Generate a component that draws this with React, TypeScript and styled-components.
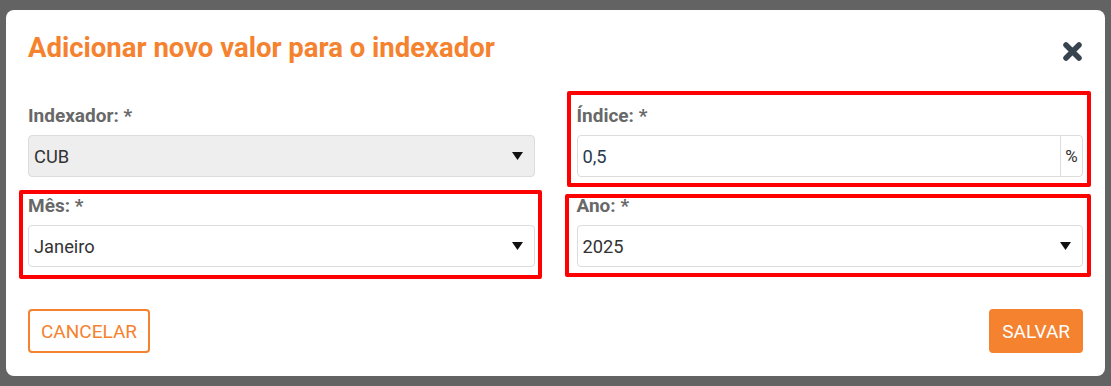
import React from "react";
import styled, { createGlobalStyle } from "styled-components";

const GlobalStyle = createGlobalStyle`
  body {
    margin: 0;
    background: #636363;
    font-family: Roboto, "Liberation Sans", sans-serif;
  }
`;

const orange = "#f5822f";

const Backdrop = styled.div`
  width: 1111px;
  height: 386px;
  box-sizing: border-box;
  padding: 10px 6px;
  background: #636363;
`;

const Modal = styled.div`
  width: 1099px;
  height: 366px;
  box-sizing: border-box;
  background: #fff;
  border-radius: 8px;
  padding: 22px 22px 23px 22px;
  display: flex;
  flex-direction: column;
`;

const Header = styled.div`
  display: flex;
  align-items: center;
  justify-content: space-between;
`;

const Title = styled.h4`
  margin: 0;
  font-size: 27.5px;
  line-height: 32px;
  font-weight: 700;
  color: ${orange};
`;

const CloseButton = styled.button`
  border: 0;
  background: none;
  padding: 0;
  margin-top: 6px;
  width: 21px;
  height: 21px;
  display: flex;
  cursor: pointer;
`;

const FormGrid = styled.div`
  display: grid;
  grid-template-columns: 1fr 1fr;
  column-gap: 42px;
  row-gap: 19px;
  margin-top: 42px;
`;

type Box = { t: number; r: number; b: number; l: number };

const Field = styled.div<{ $mark?: Box }>`
  position: relative;
  display: flex;
  flex-direction: column;

  ${({ $mark }) =>
    $mark &&
    `
    &::after {
      content: "";
      position: absolute;
      top: ${$mark.t}px;
      right: ${$mark.r}px;
      bottom: ${$mark.b}px;
      left: ${$mark.l}px;
      border: 4px solid #ff0000;
      border-radius: 2px;
      pointer-events: none;
    }
  `}
`;

const Label = styled.label`
  font-size: 19px;
  line-height: 20px;
  font-weight: 700;
  color: #686868;
  margin-bottom: 9px;
`;

const Control = styled.div<{ $disabled?: boolean }>`
  height: 42px;
  box-sizing: border-box;
  display: flex;
  align-items: center;
  border: 1px solid #dcdcdc;
  border-radius: 4px;
  background: ${({ $disabled }) => ($disabled ? "#eeeeee" : "#fff")};
  overflow: hidden;
`;

const Value = styled.span<{ $tint?: string }>`
  flex: 1;
  padding: 0 5px;
  font-size: 18.3px;
  color: ${({ $tint }) => $tint || "#333"};
`;

const Caret = styled.svg`
  width: 11px;
  height: 8px;
  margin-right: 11px;
`;

const Addon = styled.span`
  align-self: stretch;
  width: 21px;
  display: flex;
  align-items: center;
  justify-content: center;
  border-left: 1px solid #dcdcdc;
  font-size: 17px;
  color: #333;
`;

const Footer = styled.div`
  margin-top: auto;
  display: flex;
  justify-content: space-between;
`;

const Button = styled.button<{ $primary?: boolean }>`
  height: 44px;
  box-sizing: border-box;
  padding: 0 11px;
  border-radius: 4px;
  border: 2px solid ${orange};
  background: ${({ $primary }) => ($primary ? orange : "#fff")};
  color: ${({ $primary }) => ($primary ? "#fff" : orange)};
  font-family: Roboto, "Liberation Sans", sans-serif;
  font-size: 19px;
  text-transform: uppercase;
  cursor: pointer;
`;

function Select({ value, disabled }: { value: string; disabled?: boolean }) {
  return (
    <Control $disabled={disabled}>
      <Value>{value}</Value>
      <Caret viewBox="0 0 11 8">
        <polygon points="0,0 11,0 5.5,8" fill="#111" />
      </Caret>
    </Control>
  );
}

export default function App() {
  return (
    <>
      <GlobalStyle />
      <Backdrop>
        <Modal>
          <Header>
            <Title>Adicionar novo valor para o indexador</Title>
            <CloseButton aria-label="Fechar">
              <svg width="21" height="21" viewBox="0 0 21 21">
                <path
                  d="M4 4 L17 17 M17 4 L4 17"
                  stroke="#37434f"
                  strokeWidth="5.5"
                  strokeLinecap="round"
                />
              </svg>
            </CloseButton>
          </Header>

          <FormGrid>
            <Field>
              <Label>Indexador: *</Label>
              <Select value="CUB" disabled />
            </Field>
            <Field $mark={{ t: -15, r: -8, b: -10, l: -10 }}>
              <Label>Índice: *</Label>
              <Control>
                <Value $tint="#2b3a4d">0,5</Value>
                <Addon>%</Addon>
              </Control>
            </Field>
            <Field $mark={{ t: -6, r: -7, b: -12, l: -9 }}>
              <Label>Mês: *</Label>
              <Select value="Janeiro" />
            </Field>
            <Field $mark={{ t: -2, r: -8, b: -10, l: -12 }}>
              <Label>Ano: *</Label>
              <Select value="2025" />
            </Field>
          </FormGrid>

          <Footer>
            <Button>Cancelar</Button>
            <Button $primary>Salvar</Button>
          </Footer>
        </Modal>
      </Backdrop>
    </>
  );
}
